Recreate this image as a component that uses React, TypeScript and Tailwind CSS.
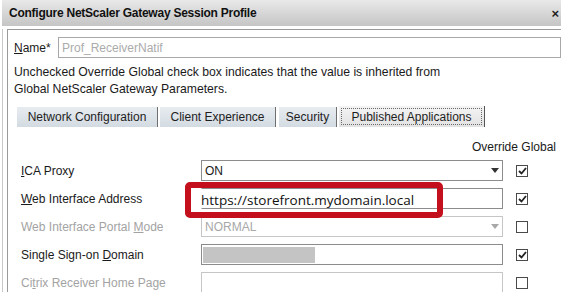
import type { ReactNode } from "react";

function Check({ checked }: { checked: boolean }) {
  return (
    <div className="w-[12px] h-[12px] border border-[#4a4a4a] bg-white flex items-center justify-center">
      {checked && (
        <svg width="9" height="8" viewBox="0 0 9 8">
          <path d="M1 4 L3.5 6.5 L8 1" stroke="#222" strokeWidth="1.8" fill="none" />
        </svg>
      )}
    </div>
  );
}

function Arrow({ color }: { color: string }) {
  return (
    <svg width="8" height="5" viewBox="0 0 8 5" className="shrink-0">
      <path d="M0 0 H8 L4 5 Z" fill={color} />
    </svg>
  );
}

function Row({
  label,
  disabled,
  checked,
  children,
}: {
  label: ReactNode;
  disabled?: boolean;
  checked: boolean;
  children: ReactNode;
}) {
  return (
    <div className="flex items-center h-[21px] mb-[7px]">
      <div className={`w-[180px] text-[12px] ${disabled ? "text-[#a3a3a3]" : "text-[#1a1a1a]"}`}>
        {label}
      </div>
      {children}
      <div className="ml-[13px]">
        <Check checked={checked} />
      </div>
    </div>
  );
}

const tabBase =
  "h-[20px] flex items-center justify-center text-[12px] text-[#1e1e1e] border-r border-[#6f6f6f] bg-gradient-to-b from-[#e7ecf0] to-[#d3dbe2]";

export default function App() {
  return (
    <div className="w-[561px] h-[292px] overflow-hidden bg-white relative font-['Liberation_Sans',Arial,sans-serif]">
      {/* title bar */}
      <div className="ml-[2px] h-[26px] bg-gradient-to-b from-[#e9e9e9] to-[#c5c5c5] flex items-center justify-between pl-[7px] pr-[2px]">
        <span className="text-[12px] font-bold tracking-[-0.25px] text-[#111]">
          Configure NetScaler Gateway Session Profile
        </span>
        <span className="text-[13px] font-bold text-[#222] leading-none">×</span>
      </div>

      <div className="flex mt-[3px]">
        <div className="w-[5px] h-[270px] border-l border-[#c8c8c8] ml-[2px] shrink-0" />
        <div className="flex-1 border-t border-l border-[#9a9a9a] h-[270px]">
          {/* name */}
          <div className="flex items-center pl-[6px] pt-[7px]">
            <span className="text-[12px] text-[#1a1a1a] w-[44px]">
              <u className="underline-offset-1">N</u>ame*
            </span>
            <div className="flex-1 h-[21px] border border-[#a8a8a8] flex items-center pl-[3px] text-[12px] text-[#ababab]">
              Prof_ReceiverNatif
            </div>
          </div>

          <div className="pl-[6px] mt-[6px] text-[12.2px] leading-[17px] text-[#1a1a1a]">
            <div>Unchecked Override Global check box indicates that the value is inherited from</div>
            <div>Global NetScaler Gateway Parameters.</div>
          </div>

          {/* tabs */}
          <div className="flex items-end ml-[9px] mt-[8px] gap-[1px]">
            <div className={`${tabBase} w-[141px]`}>Network Configuration</div>
            <div className={`${tabBase} w-[116px] ml-[1px]`}>Client Experience</div>
            <div className={`${tabBase} w-[58px] ml-[2px]`}>Security</div>
            <div className="ml-[1px] w-[146px] h-[21px] p-[2px] border-r border-[#555] bg-gradient-to-b from-[#f4f4f4] to-[#e2e2e2]">
              <div className="w-full h-full border border-dotted border-[#6a6a6a] flex items-center justify-center text-[12px] text-[#1e1e1e]">
                Published Applications
              </div>
            </div>
          </div>

          <div className="flex justify-end pr-[5px] mt-[13px] text-[12px] text-[#1a1a1a] leading-[14px]">
            Override Global
          </div>

          {/* form */}
          <div className="pl-[13px] mt-[6px] relative">
            <Row
              label={
                <>
                  <u>I</u>CA Proxy
                </>
              }
              checked
            >
              <div className="w-[302px] h-[21px] border border-[#8c8c8c] flex items-center justify-between pl-[3px] pr-[3px] text-[12px] text-[#1a1a1a]">
                ON
                <Arrow color="#333" />
              </div>
            </Row>
            <Row
              label={
                <>
                  <u>W</u>eb Interface Address
                </>
              }
              checked
            >
              <div className="w-[302px] h-[21px] border border-[#8c8c8c] border-l-transparent" />
            </Row>
            <Row
              label={
                <>
                  Web Interface Portal <u>M</u>ode
                </>
              }
              disabled
              checked={false}
            >
              <div className="w-[302px] h-[21px] border border-[#c6c6c6] flex items-center justify-between pl-[3px] pr-[3px] text-[12px] text-[#a8a8a8]">
                NORMAL
                <Arrow color="#a8a8a8" />
              </div>
            </Row>
            <Row
              label={
                <>
                  Single Sign-on <u>D</u>omain
                </>
              }
              checked
            >
              <div className="w-[302px] h-[21px] border border-[#8c8c8c] flex items-center pl-[1px]">
                <div className="w-[112px] h-[16px] bg-[#c4c4c4]" />
              </div>
            </Row>
            <Row
              label={
                <>
                  Ci<u>t</u>rix Receiver Home Page
                </>
              }
              disabled
              checked={false}
            >
              <div className="w-[302px] h-[21px] border border-[#c6c6c6]" />
            </Row>

            {/* highlight */}
            <div className="absolute left-[177px] top-[22px] w-[258px] h-[36px] border-[6px] border-[#c4101c] rounded-[5px] flex items-center pl-[10px]">
              <span className="font-['Open_Sans',sans-serif] text-[13.5px] text-[#111]">
                https://storefront.mydomain.local
              </span>
            </div>
          </div>
        </div>
      </div>
    </div>
  );
}
